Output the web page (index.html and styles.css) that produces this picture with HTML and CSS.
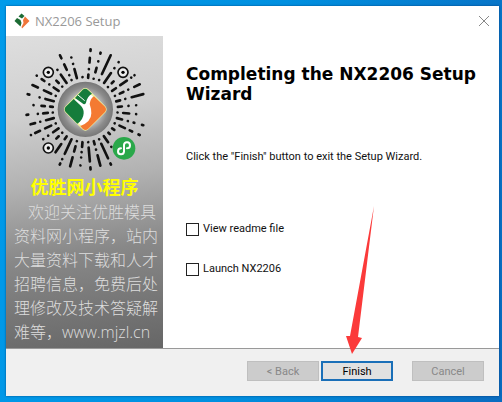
FILE: index.html
```
<!DOCTYPE html>
<html lang="en">
<head>
  <meta charset="UTF-8">
  <meta name="viewport" content="width=device-width, initial-scale=1.0">
  <title>NX2206 Setup</title>
  <link rel="stylesheet" href="styles.css">
</head>
<body>
  <div class="window">
    <header class="titlebar">
      <svg class="app-icon" viewBox="0 0 16 16" aria-hidden="true">
        <path d="M7.500 0.500 L10.500 3 L8 5.500 L4.500 3.500 Z" fill="#1c6b34"/>
        <path d="M3 5 L6.500 7 L7.500 10 L6.500 13.500 L0.500 8 Z" fill="#1c6b34"/>
        <path d="M11 3.500 L15.500 8 L8 15.500 L7.500 14 L9.500 10 L9 7 Z" fill="#f0763a"/>
      </svg>
      <span class="title">NX2206 Setup</span>
      <button class="close" type="button" aria-label="Close">
        <svg viewBox="0 0 12 12"><path d="M1 1 L11 11 M11 1 L1 11"/></svg>
      </button>
    </header>

    <main class="content">
      <aside class="side">
        <svg class="code" viewBox="0 0 402 396" aria-hidden="true">
          <defs>
            <radialGradient id="disc">
              <stop offset="0.500" stop-color="#ccc"/>
              <stop offset="0.800" stop-color="#8c8c8c"/>
              <stop offset="1" stop-color="#777"/>
            </radialGradient>
          </defs>
          <g class="rays" transform="translate(196 197)">
            <path transform="rotate(5)" d="M0-96v-10M0-122v0M0-142v-14M0-177v-5"/>
            <path transform="rotate(15)" d="M0-96v0M0-116v-14M0-150v0M0-174v-3"/>
            <path transform="rotate(25)" d="M0-98v0M0-118v-62"/>
            <path transform="rotate(35)" d="M0-98v-36M0-152v0M0-174v0"/>
            <path transform="rotate(45)" d="M0-96v0M0-112v-8"/>
            <path transform="rotate(55)" d="M0-98v-14M0-128v-24M0-168v0M0-180v0"/>
            <path transform="rotate(65)" d="M0-98v0M0-114v-12M0-142v0M0-162v-18"/>
            <path transform="rotate(75)" d="M0-96v-12M0-124v0M0-144v-36"/>
            <path transform="rotate(85)" d="M0-98v-12M0-130v0M0-153v0"/>
            <path transform="rotate(95)" d="M0-97v0M0-114v-18M0-153v0"/>
            <path transform="rotate(105)" d="M0-98v-16M0-132v0M0-150v-2M0-176v-4"/>
            <path transform="rotate(115)" d="M0-97v0M0-113v-18M0-147v-8M0-176v-4"/>
            <path transform="rotate(125)" d="M0-98v-8"/>
            <path transform="rotate(135)" d="M0-98v-6"/>
            <path transform="rotate(145)" d="M0-97v-22M0-136v0"/>
            <path transform="rotate(155)" d="M0-98v0M0-113v-48M0-178v-4"/>
            <path transform="rotate(165)" d="M0-98v-10M0-124v0M0-142v-32"/>
            <path transform="rotate(175)" d="M0-98v0M0-114v-42M0-174v-6"/>
            <path transform="rotate(185)" d="M0-98v-14M0-128v0M0-144v0M0-168v0"/>
            <path transform="rotate(195)" d="M0-98v0M0-114v-16M0-148v-28"/>
            <path transform="rotate(205)" d="M0-98v-48M0-164v0M0-178v-4"/>
            <path transform="rotate(215)" d="M0-98v-10M0-126v-30"/>
            <path transform="rotate(225)" d="M0-98v0M0-113v-10"/>
            <path transform="rotate(235)" d="M0-98v-20M0-136v0M0-154v0"/>
            <path transform="rotate(245)" d="M0-98v0M0-113v-20M0-150v-16M0-180v0"/>
            <path transform="rotate(255)" d="M0-98v-24M0-140v0M0-156v-14"/>
            <path transform="rotate(265)" d="M0-98v0M0-113v-14M0-143v0M0-172v-5"/>
            <path transform="rotate(275)" d="M0-98v-8M0-122v-10M0-156v0"/>
            <path transform="rotate(285)" d="M0-98v-26M0-142v0M0-174v-5"/>
            <path transform="rotate(295)" d="M0-98v0M0-113v-24M0-157v-18"/>
            <path transform="rotate(305)" d="M0-98v-18M0-132v0M0-150v-10M0-178v0"/>
            <path transform="rotate(315)" d="M0-98v0M0-113v-10"/>
            <path transform="rotate(325)" d="M0-98v-30M0-146v0"/>
            <path transform="rotate(335)" d="M0-98v0M0-114v0M0-132v-18M0-170v-10"/>
            <path transform="rotate(345)" d="M0-98v-28M0-142v0M0-162v0"/>
            <path transform="rotate(355)" d="M0-98v0"/>
          </g>
          <g class="finder">
            <circle cx="85" cy="85" r="15"/>
            <circle cx="309" cy="85" r="15"/>
            <circle cx="85" cy="312" r="15"/>
          </g>
          <circle cx="85" cy="85" r="5"/>
          <circle cx="309" cy="85" r="5"/>
          <circle cx="85" cy="312" r="5"/>
          <circle cx="196" cy="196" r="83" fill="url(#disc)"/>
          <rect class="glow" x="150" y="150" width="92" height="92" rx="10" transform="rotate(45 196 196)"/>
          <path d="M188 137 Q196 131 204 138 L216 149 Q202 156 198 176 Q194 184 187 178 L165 162 Z" fill="#157c3b"/>
          <path d="M161 165 L181 184 Q192 194 191 208 Q190 228 172 239 L137 204 Q131 196 137 188 Z" fill="#157c3b"/>
          <path d="M209 180 Q211 164 222 157 L255 188 Q261 196 255 204 L204 255 Q196 261 188 254 L181 246 Q214 234 214 208 Q214 194 209 180 Z" fill="#f47a32"/>
          <path d="M174 153 L194 170" stroke="#fff" stroke-width="3"/>
          <circle cx="312" cy="313" r="34" fill="#2aa84a"/>
          <path class="mini" d="M303 313 a9 9 0 1 0 9 10 v-20 a9 9 0 1 1 9 10"/>
        </svg>
        <h2 class="side-title">优胜网小程序</h2>
        <p class="side-text">欢迎关注优胜模具资料网小程序，站内大量资料下载和人才招聘信息，免费后处理修改及技术答疑解难等，www.mjzl.cn</p>
      </aside>

      <section class="panel">
        <h1>Completing the NX2206 Setup Wizard</h1>
        <p class="hint">Click the "Finish" button to exit the Setup Wizard.</p>
        <div class="options">
          <label for="readme"><input type="checkbox" id="readme">View readme file</label>
          <label for="launch"><input type="checkbox" id="launch">Launch NX2206</label>
        </div>
      </section>
    </main>

    <footer class="actions">
      <button type="button" disabled>&lt; Back</button>
      <button type="button" class="primary">Finish</button>
      <button type="button" class="cancel" disabled>Cancel</button>
      <svg class="arrow" viewBox="0 0 30 148" aria-hidden="true">
        <path d="M29 0 L13 131 L17 132 L7 148 L1 130 L5 130 Z"/>
      </svg>
    </footer>
  </div>
</body>
</html>
```
FILE: styles.css
```
/* Desktop */
* {
  box-sizing: border-box;
}

body {
  margin: 0;
  min-height: 100vh;
  padding: 6px 3px 6px 6px;
  display: flex;
  background: linear-gradient(100deg, #009bea 0%, #0090e0 50%, #0a6cc0 100%);
  font-family: Roboto, "Noto Sans CJK SC", sans-serif;
  font-size: 11px;
  color: #111;
}

/* Window */
.window {
  flex: 1;
  display: flex;
  flex-direction: column;
  background: #fff;
  box-shadow: 0 0 2px rgba(0, 30, 80, 0.6);
}

.titlebar {
  display: flex;
  align-items: center;
  height: 30px;
  padding: 0 8px;
}

.app-icon {
  width: 16px;
  height: 16px;
  margin-right: 5px;
}

.title {
  flex: 1;
  font-family: "Open Sans", sans-serif;
  font-size: 13px;
  color: #999;
}

.close {
  width: 14px;
  height: 14px;
  padding: 1px;
  border: none;
  background: none;
}

.close svg {
  display: block;
  fill: none;
  stroke: #888;
}

.content {
  flex: 1;
  display: flex;
}

/* Side banner */
.side {
  width: 157px;
  padding: 8px 8px 0;
  background: linear-gradient(172deg, #dedede 0%, #cfcfcf 25%, #b2b2b2 46%, #888 68%, #666 100%);
}

.code {
  display: block;
  width: 134px;
  height: 132px;
  margin-left: 6px;
}

.rays {
  fill: none;
  stroke: #111;
  stroke-width: 8;
  stroke-linecap: round;
}

.finder {
  fill: #eee;
  stroke: #111;
  stroke-width: 5;
}

.glow {
  fill: #fff;
  stroke: #f0f3a0;
  stroke-width: 6;
}

.mini {
  fill: none;
  stroke: #fff;
  stroke-width: 6;
  stroke-linecap: round;
}

.side-title {
  margin: 0 0 4px;
  font-family: "Noto Sans CJK SC", sans-serif;
  font-size: 18px;
  line-height: 20px;
  text-align: center;
  color: #ff0;
}

.side-text {
  margin: 0 -8px 0 0;
  text-indent: 14px;
  font-family: "Open Sans", "Noto Sans CJK SC", sans-serif;
  font-size: 16px;
  font-weight: 300;
  line-height: 24px;
  color: #ddd;
}

/* Main panel */
.panel {
  flex: 1;
  padding: 28px 20px 0 23px;
}

h1 {
  margin: 0;
  font-family: "DejaVu Sans", sans-serif;
  font-size: 17px;
  line-height: 20px;
  color: #000;
}

.hint {
  margin: 45px 0 0;
  line-height: 16px;
}

.options {
  display: flex;
  flex-direction: column;
  gap: 24px;
  margin-top: 56px;
}

.options label {
  display: flex;
  align-items: center;
  gap: 4px;
  line-height: 16px;
}

.options input {
  appearance: none;
  width: 13px;
  height: 13px;
  margin: 0;
  border: 1px solid #222;
  background: #fff;
}

/* Footer */
.actions {
  position: relative;
  display: flex;
  justify-content: flex-end;
  gap: 2px;
  padding: 12px 15px 15px;
  border-top: 1px solid #999;
  background: #f0f0f0;
}

.actions button {
  width: 72px;
  height: 20px;
  padding: 0;
  border: 1px solid #bfbfbf;
  background: #ccc;
  font: inherit;
  color: #888;
}

.actions .primary {
  border: 2px solid #1a6fb8;
  background: #e1e1e1;
  color: #000;
}

.actions .cancel {
  margin-left: 17px;
}

/* Pointer to the Finish button */
.arrow {
  position: absolute;
  right: 124px;
  bottom: 42px;
  width: 30px;
  height: 148px;
  fill: #fb3a3a;
}
```
